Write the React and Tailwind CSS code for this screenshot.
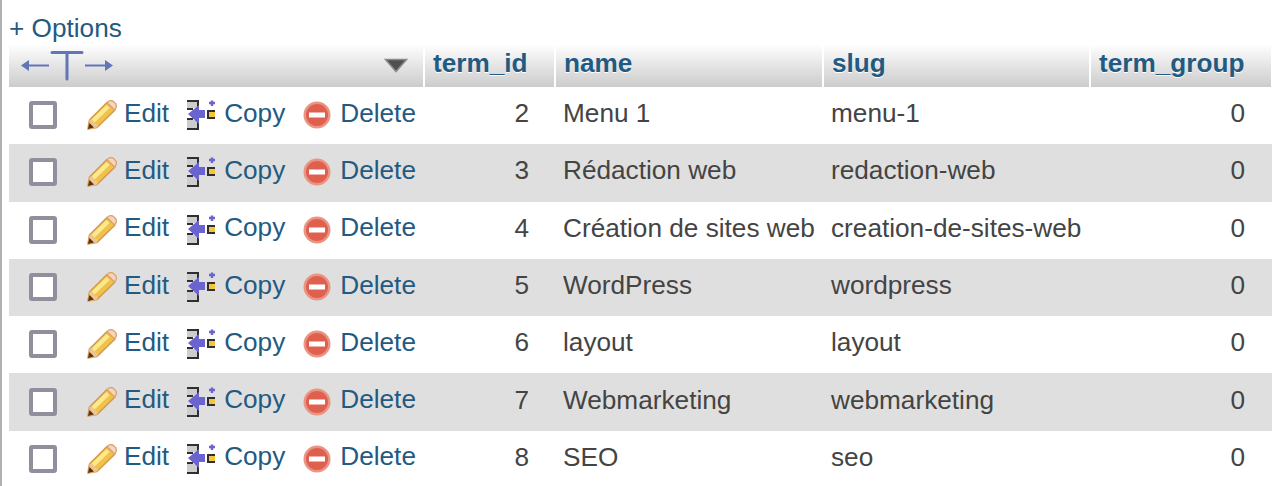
import React from 'react';

const rows = [
  [2, 'Menu 1', 'menu-1'],
  [3, 'Rédaction web', 'redaction-web'],
  [4, 'Création de sites web', 'creation-de-sites-web'],
  [5, 'WordPress', 'wordpress'],
  [6, 'layout', 'layout'],
  [7, 'Webmarketing', 'webmarketing'],
  [8, 'SEO', 'seo'],
];

function PencilIcon() {
  return (
    <svg width="30" height="30" viewBox="0 0 30 30" className="shrink-0">
      <path d="M1 29 L2.5 20 L20 2.5 L28 10 L10 27.5 Z" fill="#f0c24c" stroke="#d49a4c" strokeWidth="1.6" strokeLinejoin="round" />
      <path d="M6 21 L21 6.5" stroke="#fbe98c" strokeWidth="4.5" />
      <path d="M2.5 20 L5 19 L7 23 L11 25 L10 27.5 L2 29 Z" fill="#eec596" />
      <path d="M20 2.5 L22 1 Q24.5 0 26.5 1.5 L29 4 Q30 6.5 28.5 8.5 L27.5 10 Z" fill="#f6d5be" stroke="#dca26a" strokeWidth="1.3" />
      <path d="M1 29 L2.5 23 L7 27.5 Z" fill="#5a3410" />
    </svg>
  );
}

function CopyIcon() {
  return (
    <svg width="28" height="30" viewBox="0 0 28 30" className="shrink-0">
      <rect x="0" y="2" width="10" height="6" fill="#cdcdcd" />
      <rect x="0" y="20" width="10" height="8" fill="#cdcdcd" />
      <path d="M0 0 H12 V8 H10 V2 H0 Z" fill="#2f2f2f" />
      <rect x="0" y="8" width="6" height="2" fill="#2f2f2f" />
      <rect x="0" y="18" width="6" height="2" fill="#2f2f2f" />
      <path d="M0 30 H12 V20 H10 V28 H0 Z" fill="#2f2f2f" />
      <path d="M1 14 L12 5 V10 H18 V18 H12 V24 Z" fill="#6a64d0" />
      <path d="M25 0.5 V6 M22 3 H28" stroke="#6a64d0" strokeWidth="2.4" />
      <rect x="20" y="10" width="8" height="9" fill="#2f2f2f" />
      <rect x="22" y="12" width="6" height="5" fill="#f5c53a" />
    </svg>
  );
}

function DeleteIcon() {
  return (
    <svg width="28" height="28" viewBox="0 0 28 28" className="shrink-0">
      <circle cx="14" cy="14" r="13.5" fill="#ea9484" />
      <circle cx="14" cy="14" r="11" fill="#e0604f" />
      <rect x="6" y="11.5" width="16" height="5" fill="#ffffff" />
    </svg>
  );
}

function ActionLink({ icon, label, gap }) {
  return (
    <span className={'flex items-center ' + gap}>
      {icon}
      <span className="mb-[5px]">{label}</span>
    </span>
  );
}

export default function App() {
  return (
    <div className="h-[486px] w-[1284px] overflow-hidden border-l-2 border-[#b0b0b0] bg-white pl-[7px] font-['Liberation_Sans',Arial,sans-serif] text-[26.2px] leading-[30px] text-[#444444]">
      <div className="flex h-[44px] items-end pb-[1px] text-[#235a81]">+ Options</div>
      <div className="grid w-[1263px] grid-cols-[416px_131px_268px_267px_181px]">
        <div className="flex h-[43px] items-center justify-between border-r-2 border-white bg-gradient-to-b from-white to-[#cccccc] pl-[12px] pr-[15px]">
          <svg width="94" height="34" viewBox="0 0 94 34">
            <path d="M0 16.5 L8 11 V15.5 H28 V17.5 H8 V22 Z" fill="#6275b5" />
            <path d="M31 3.5 H61 M46 3.5 V30" stroke="#6275b5" strokeWidth="3" strokeLinecap="round" />
            <path d="M92 16.5 L84 11 V15.5 H64 V17.5 H84 V22 Z" fill="#6275b5" />
          </svg>
          <svg width="24" height="15" viewBox="0 0 24 15">
            <path d="M1.5 1.5 H22.5 L12 13.5 Z" fill="#505050" stroke="#8a8a8a" strokeWidth="1.5" />
          </svg>
        </div>
        {['term_id', 'name', 'slug', 'term_group'].map((h, i) => (
          <div
            key={h}
            className={
              'flex h-[43px] items-center bg-gradient-to-b from-white to-[#cccccc] pb-[6px] pl-[8px] font-bold text-[#235a81] [text-shadow:0_1px_0_#ffffff] ' +
              (i < 3 ? 'border-r-2 border-white' : 'mr-[1px]')
            }
          >
            {h}
          </div>
        ))}
      </div>
      {rows.map(([id, name, slug], i) => (
        <div
          key={id}
          className={
            'grid h-[57.3px] w-[1263px] grid-cols-[416px_131px_268px_267px_181px] items-center ' +
            (i % 2 === 1 ? 'bg-[#dfdfdf]' : 'bg-white')
          }
        >
          <div className="mb-[1px] flex items-center text-[#235a81]">
            <span className="ml-[20px] h-[28px] w-[28px] rounded-[3px] border-[4px] border-[#8f8f9d] bg-white" />
            <div className="ml-[30px] flex gap-[18px]">
              <ActionLink icon={<PencilIcon />} label="Edit" gap="gap-[7px]" />
              <ActionLink icon={<CopyIcon />} label="Copy" gap="gap-[9px]" />
              <ActionLink icon={<DeleteIcon />} label="Delete" gap="gap-[9px]" />
            </div>
          </div>
          <div className="mb-[5px] pr-[27px] text-right">{id}</div>
          <div className="mb-[5px] pl-[7px]">{name}</div>
          <div className="mb-[5px] pl-[7px]">{slug}</div>
          <div className="mb-[5px] pr-[27px] text-right">0</div>
        </div>
      ))}
    </div>
  );
}
